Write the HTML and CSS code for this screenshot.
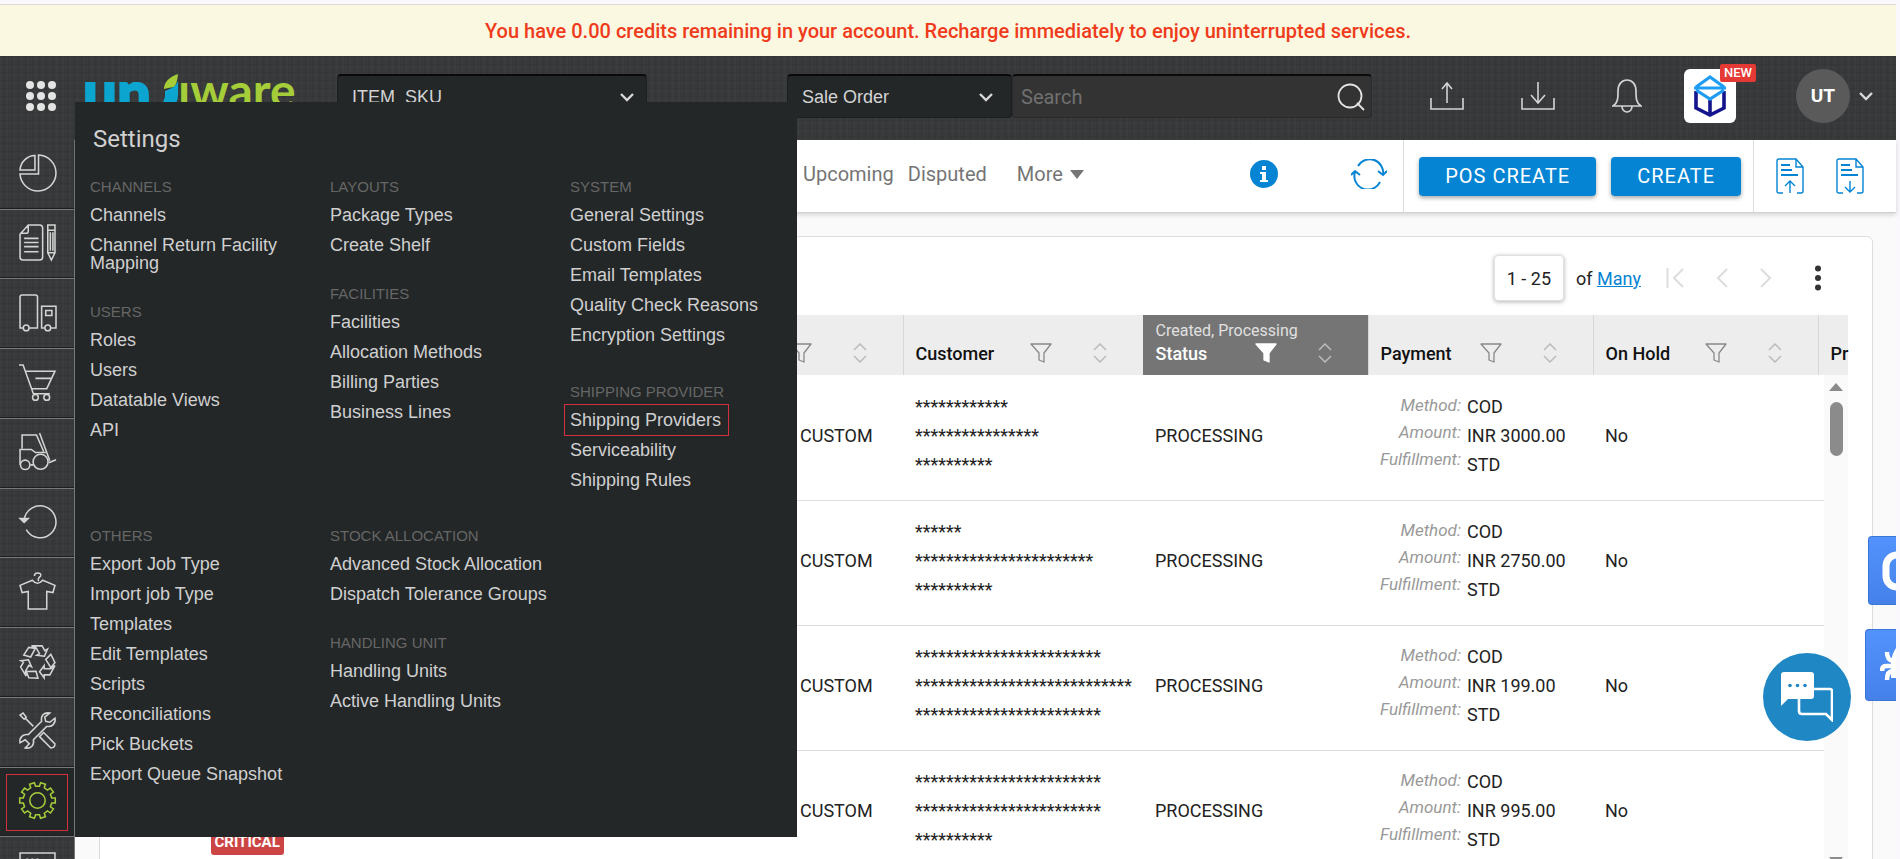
FILE: index.html
```html
<!DOCTYPE html>
<html lang="en">
<head>
  <meta charset="UTF-8">
  <meta name="viewport" content="width=device-width, initial-scale=1.0">
  <title>Sale Orders</title>
  <link rel="stylesheet" href="styles.css">
</head>
<body>
  <svg width="0" height="0" class="sprite" aria-hidden="true">
    <symbol id="chevron" viewBox="0 0 16 10"><path d="M2 2l6 6 6-6" fill="none" stroke="#d8d8d8" stroke-width="2.4"/></symbol>
    <symbol id="funnel" viewBox="0 0 22 20"><path d="M1 1h20l-7 9v9l-5-2v-7z" stroke-width="1.3" stroke-linejoin="round"/></symbol>
    <symbol id="sort" viewBox="0 0 14 20"><path d="M1 7l6-6 6 6M1 13l6 6 6-6" fill="none" stroke-width="1.5"/></symbol>
  </svg>

  <div class="page">
    <div class="banner">You have 0.00 credits remaining in your account. Recharge immediately to enjoy uninterrupted services.</div>

    <header class="header">
      <button class="icon-btn apps" aria-label="Apps">
        <svg width="30" height="30" viewBox="0 0 30 30" fill="#e4e4e4">
          <circle cx="4" cy="4" r="4"/><circle cx="15" cy="4" r="4"/><circle cx="26" cy="4" r="4"/>
          <circle cx="4" cy="15" r="4"/><circle cx="15" cy="15" r="4"/><circle cx="26" cy="15" r="4"/>
          <circle cx="4" cy="26" r="4"/><circle cx="15" cy="26" r="4"/><circle cx="26" cy="26" r="4"/>
        </svg>
      </button>
      <svg class="logo" width="212" height="50" viewBox="0 0 212 50">
        <text x="-3" y="42" class="logo-blue">un</text>
        <path d="M92 8q-2 6-13 10 1 10-6 16h13q6-4 6-12z" fill="#0ba5d0"/>
        <path d="M78 16q0-10 14-15-1 12-5 13-5 1-9 2z" fill="#a5cd39"/>
        <text x="92" y="35" class="logo-green">ıware</text>
      </svg>

      <div class="select-box item-select">
        <select aria-label="Search field"><option>ITEM_SKU</option></select>
        <svg width="16" height="10"><use href="#chevron"/></svg>
      </div>

      <div class="search-group">
        <div class="select-box order-select">
          <select aria-label="Search type"><option>Sale Order</option></select>
          <svg width="16" height="10"><use href="#chevron"/></svg>
        </div>
        <div class="search-box">
          <input type="text" placeholder="Search" aria-label="Search">
          <button class="icon-btn" aria-label="Search">
            <svg width="28" height="28" viewBox="0 0 28 28" fill="none" stroke="#e4e4e4" stroke-width="1.8"><circle cx="13" cy="13" r="11.5"/><path d="M20 20l7 7"/></svg>
          </button>
        </div>
      </div>

      <div class="header-actions">
        <button class="icon-btn" aria-label="Import">
          <svg width="34" height="30" viewBox="0 0 34 30" fill="none" stroke="#d4d4d4" stroke-width="1.6"><path d="M1 17v11h32V17M17 22V2M12 8l5-6 5 6"/></svg>
        </button>
        <button class="icon-btn" aria-label="Export">
          <svg width="34" height="30" viewBox="0 0 34 30" fill="none" stroke="#d4d4d4" stroke-width="1.6"><path d="M1 17v11h32V17M17 1v20M10 14l7 8 7-8"/></svg>
        </button>
        <button class="icon-btn" aria-label="Notifications">
          <svg width="30" height="34" viewBox="0 0 30 34" fill="none" stroke="#d4d4d4" stroke-width="1.7"><path d="M1 27c5-3 5-8 5-15C6 5 10 1 15 1s9 4 9 11c0 7 0 12 5 15zM10 27c0 8 10 8 10 0"/></svg>
        </button>
        <button class="icon-btn product" aria-label="New product">
          <svg width="34" height="42" viewBox="0 0 34 42" fill="none">
            <path d="M3 16v17l14 7 14-7V16M17 25v15" stroke="#14148c" stroke-width="3.6"/>
            <path d="M3 12L17 2l14 10M1 13h32M3 15l14 9 14-9" stroke="#1f9df5" stroke-width="3.2"/>
          </svg>
          <span class="new-badge">NEW</span>
        </button>
        <button class="icon-btn user">
          <span class="avatar">UT</span>
          <svg width="16" height="10"><use href="#chevron"/></svg>
        </button>
      </div>
    </header>

    <div class="workspace">
      <nav class="sidebar">
        <a href="#" aria-label="Dashboard"><svg viewBox="0 0 36 36"><path d="M19 19.500V1a17.500 17.500 0 1 1-18 18.500zM15.500 1.500v14H1a15 15 0 0 1 14.500-14z"/></svg></a>
        <a href="#" aria-label="Orders"><svg viewBox="0 0 36 36"><path d="M9 1h11a3 3 0 0 1 3 3v28a3 3 0 0 1-3 3H4a3 3 0 0 1-3-3V10zM9 1v6a2 2 0 0 1-2 2H1M5 14h14M5 18h14M5 22h14M5 27h14M28 1h7v27l-3.500 7-3.500-7zM28 6h7M30.500 8v18M33 8v18M28 28h7"/></svg></a>
        <a href="#" aria-label="Shipments"><svg viewBox="0 0 36 36"><path d="M4 33H1V3q0-2 2-2h13q2 0 2 2v30h-8M25 33h-3V12h14v21h-5M26 16h6v5h-6z"/><circle cx="7" cy="33" r="2.800"/><circle cx="28" cy="33" r="2.800"/></svg></a>
        <a href="#" aria-label="Procurement"><svg viewBox="0 0 36 36"><path d="M0 1h4l10 28h16M7 7h28l-8 17H12M16 14h15"/><circle cx="16" cy="32.500" r="2.800"/><circle cx="27" cy="32.500" r="2.800"/></svg></a>
        <a href="#" aria-label="Inventory"><svg viewBox="0 0 36 36"><path d="M3 15V2h14l7 16M1 31V16h11l4 3h10M20 0l10 27M29 29l7-3M11 31h3"/><circle cx="6" cy="31" r="4.600"/><circle cx="21" cy="28" r="7.300"/></svg></a>
        <a href="#" aria-label="Returns"><svg viewBox="0 0 36 36"><path d="M5 17a15.500 15.500 0 1 1 2 9"/><path d="M1 15h8l-4 4z" fill="#d4d4d4"/></svg></a>
        <a href="#" aria-label="Products"><svg viewBox="0 0 36 36"><path d="M13 7L1 12l2 7 6-1v17h18V18l6 1 2-7-12-5q-5 6-10 0zM15 3q0-3 3-3 4 0 3 3-3 2-2 5"/></svg></a>
        <a href="#" aria-label="Recycle"><svg viewBox="0 0 36 36">
          <g id="recycle-arm"><path d="M20 29l4.500-6v3H31l4-3-5 9h-5.500v3zM31 12l4 8-4 5-5-8z"/></g>
          <use href="#recycle-arm" transform="rotate(120 18 20)"/>
          <use href="#recycle-arm" transform="rotate(240 18 20)"/>
        </svg></a>
        <a href="#" aria-label="Tools"><svg viewBox="0 0 36 36"><path d="M30 1c-6-1-9 3-8 8L9 22c-5-1-9 3-8 8l5-3 4 4-4 4c6 1 9-3 8-8l13-13c5 1 9-3 8-8l-5 4-4-1-1-4zM1 3l3-2 3 4-2 2zM6 6l8 8M20 24l4-4 11 11q0 4-4 4z"/></svg></a>
        <a href="#" class="active" aria-label="Settings"><svg viewBox="0 0 36 36"><path d="M19.900 4.100L21 .8l4.700 1.500-1.100 3.300 3.100 2.300 2.900-2.100 2.900 4-2.900 2.100 1.200 3.700h3.500v4.800h-3.500l-1.200 3.700 2.900 2.100-2.900 4-2.900-2.100-3.100 2.300 1.100 3.300-4.700 1.500-1.100-3.300h-3.800L15 35.200l-4.700-1.500 1.100-3.300-3.100-2.300-2.900 2.100-2.900-4 2.900-2.100-1.200-3.700H.7v-4.800h3.500l1.200-3.700-2.900-2.100 2.900-4 2.900 2.100 3.100-2.300-1.100-3.300L15 .8l1.100 3.300z"/><circle cx="18" cy="18" r="7.500"/></svg></a>
        <a href="#" aria-label="Console"><svg viewBox="0 0 36 36"><path d="M1 1h34v30H1zM7 7h2M12 7h2M17 7h2"/></svg></a>
      </nav>

      <section class="settings-menu">
        <h2>Settings</h2>
        <div class="menu-grid">
          <div>
            <div class="menu-group">
              <h3>CHANNELS</h3>
              <a href="#">Channels</a>
              <a href="#">Channel Return Facility Mapping</a>
            </div>
            <div class="menu-group">
              <h3>USERS</h3>
              <a href="#">Roles</a>
              <a href="#">Users</a>
              <a href="#">Datatable Views</a>
              <a href="#">API</a>
            </div>
          </div>
          <div>
            <div class="menu-group">
              <h3>LAYOUTS</h3>
              <a href="#">Package Types</a>
              <a href="#">Create Shelf</a>
            </div>
            <div class="menu-group">
              <h3>FACILITIES</h3>
              <a href="#">Facilities</a>
              <a href="#">Allocation Methods</a>
              <a href="#">Billing Parties</a>
              <a href="#">Business Lines</a>
            </div>
          </div>
          <div>
            <div class="menu-group system">
              <h3>SYSTEM</h3>
              <a href="#">General Settings</a>
              <a href="#">Custom Fields</a>
              <a href="#">Email Templates</a>
              <a href="#">Quality Check Reasons</a>
              <a href="#">Encryption Settings</a>
            </div>
            <div class="menu-group">
              <h3>SHIPPING PROVIDER</h3>
              <a href="#" class="marked">Shipping Providers</a>
              <a href="#">Serviceability</a>
              <a href="#">Shipping Rules</a>
            </div>
          </div>
          <div>
            <div class="menu-group">
              <h3>OTHERS</h3>
              <a href="#">Export Job Type</a>
              <a href="#">Import job Type</a>
              <a href="#">Templates</a>
              <a href="#">Edit Templates</a>
              <a href="#">Scripts</a>
              <a href="#">Reconciliations</a>
              <a href="#">Pick Buckets</a>
              <a href="#">Export Queue Snapshot</a>
            </div>
          </div>
          <div>
            <div class="menu-group">
              <h3>STOCK ALLOCATION</h3>
              <a href="#">Advanced Stock Allocation</a>
              <a href="#">Dispatch Tolerance Groups</a>
            </div>
            <div class="menu-group">
              <h3>HANDLING UNIT</h3>
              <a href="#">Handling Units</a>
              <a href="#">Active Handling Units</a>
            </div>
          </div>
        </div>
      </section>

      <main class="main">
        <div class="subnav">
          <div class="tabs">
            <a href="#">Upcoming</a>
            <a href="#">Disputed</a>
            <a href="#" class="more">More <span class="caret"></span></a>
          </div>
          <div class="subnav-tools">
            <button class="icon-btn" aria-label="Info">
              <svg width="28" height="28" viewBox="0 0 28 28"><circle cx="14" cy="14" r="14" fill="#0584d4"/><path d="M12 6h4v4h-4zM10 12h6v8h2v2h-8v-2h2v-6h-2z" fill="#fff"/></svg>
            </button>
            <button class="icon-btn" aria-label="Refresh">
              <svg width="36" height="30" viewBox="0 0 36 30" fill="none" stroke="#0584d4" stroke-width="2"><path d="M7 7a13.500 13.500 0 0 1 25 9M29 23A13.500 13.500 0 0 1 4 13M27 12l5 4 4-4M0 16l4-4 5 4"/></svg>
            </button>
          </div>
          <div class="subnav-buttons">
            <button class="primary-btn">POS CREATE</button>
            <button class="primary-btn">CREATE</button>
          </div>
          <div class="subnav-docs">
            <button class="icon-btn" aria-label="Import orders">
              <svg width="28" height="36" viewBox="0 0 28 36" fill="none" stroke="#0584d4" stroke-width="1.400"><path d="M7 35H3q-2 0-2-2V3q0-2 2-2h17l7 8v24q0 2-2 2h-4M20 1v8h7M14 35V24M9 28l5-5 5 5"/><path d="M5 7h9M5 12h11M5 17h17" stroke-width="2"/></svg>
            </button>
            <button class="icon-btn" aria-label="Export orders">
              <svg width="28" height="36" viewBox="0 0 28 36" fill="none" stroke="#0584d4" stroke-width="1.400"><path d="M7 35H3q-2 0-2-2V3q0-2 2-2h17l7 8v24q0 2-2 2h-4M20 1v8h7M14 23v11M9 29l5 5 5-5"/><path d="M5 7h9M5 12h11M5 17h17" stroke-width="2"/></svg>
            </button>
          </div>
        </div>

        <div class="panel">
          <div class="panel-toolbar">
            <button class="range-btn">1 - 25</button>
            <span class="total">of <a href="#">Many</a></span>
            <div class="pager">
              <button class="icon-btn" aria-label="First page"><svg width="18" height="20" viewBox="0 0 18 20"><path d="M1.500 0v20M17 1L8 10l9 9"/></svg></button>
              <button class="icon-btn" aria-label="Previous page"><svg width="12" height="20" viewBox="0 0 12 20"><path d="M11 1l-9 9 9 9"/></svg></button>
              <button class="icon-btn" aria-label="Next page"><svg width="12" height="20" viewBox="0 0 12 20"><path d="M1 1l9 9-9 9"/></svg></button>
            </div>
            <button class="icon-btn dots" aria-label="More options"><svg width="6" height="26" viewBox="0 0 6 26" fill="#333"><circle cx="3" cy="3.500" r="3"/><circle cx="3" cy="13" r="3"/><circle cx="3" cy="22.500" r="3"/></svg></button>
          </div>

          <div class="table-wrap">
            <table class="orders">
              <colgroup>
                <col><col class="col-std"><col class="col-customer"><col class="col-std"><col class="col-std"><col class="col-std"><col class="col-last">
              </colgroup>
              <thead>
                <tr>
                  <th></th>
                  <th><div class="th-row"><svg class="funnel"><use href="#funnel"/></svg><svg class="sort"><use href="#sort"/></svg></div></th>
                  <th><div class="th-row"><span>Customer</span><svg class="funnel"><use href="#funnel"/></svg><svg class="sort"><use href="#sort"/></svg></div></th>
                  <th class="filtered"><div class="th-filter">Created, Processing</div><div class="th-row"><span>Status</span><svg class="funnel"><use href="#funnel"/></svg><svg class="sort"><use href="#sort"/></svg></div></th>
                  <th><div class="th-row"><span>Payment</span><svg class="funnel"><use href="#funnel"/></svg><svg class="sort"><use href="#sort"/></svg></div></th>
                  <th><div class="th-row"><span>On Hold</span><svg class="funnel"><use href="#funnel"/></svg><svg class="sort"><use href="#sort"/></svg></div></th>
                  <th><div class="th-row"><span>Pr</span></div></th>
                </tr>
              </thead>
              <tbody id="orderRows"></tbody>
            </table>
            <div class="scrollbar">
              <span class="arrow up"></span>
              <span class="thumb"></span>
              <span class="arrow down"></span>
            </div>
          </div>
        </div>
      </main>

      <button class="side-tab tab-one" aria-label="Capture">
        <svg width="14" height="40" viewBox="0 0 14 40"><rect x="4" y="4" width="40" height="32" rx="11" fill="none" stroke="#fff" stroke-width="7"/></svg>
      </button>
      <button class="side-tab tab-two" aria-label="Report a bug">
        <svg width="16" height="40" viewBox="0 0 16 40"><path d="M16 3q-4 6-5 14v16h5z" fill="#fff"/><path d="M13 16q-6-1-6-9M13 21H6q-4 0-4 5M13 26q-6 0-6 9" fill="none" stroke="#fff" stroke-width="4.500"/></svg>
      </button>
      <button class="chat-btn" aria-label="Chat">
        <svg width="52" height="50" viewBox="0 0 52 50">
          <path d="M18 26v13q0 3 3 3h24l6 6V19q0-2-2-2H32" fill="none" stroke="#fff" stroke-width="2.600"/>
          <path d="M3 0h27q3 0 3 3v21q0 3-3 3H7l-7 7V3q0-3 3-3z" fill="#fff"/>
          <circle cx="9" cy="13.500" r="1.800" fill="#1f87c4"/><circle cx="16.500" cy="13.500" r="1.800" fill="#1f87c4"/><circle cx="24" cy="13.500" r="1.800" fill="#1f87c4"/>
        </svg>
      </button>
    </div>
  </div>

  <script>
    const orders = [
      { customer: [12, 16, 10], amount: "INR 3000.00" },
      { customer: [6, 23, 10], amount: "INR 2750.00" },
      { customer: [24, 28, 24], amount: "INR 199.00" },
      { customer: [24, 24, 10], amount: "INR 995.00", critical: true }
    ];

    function renderOrders() {
      const body = document.getElementById('orderRows');

      orders.forEach(order => {
        const row = document.createElement('tr');
        const lines = order.customer.map(count => `<div>${'*'.repeat(count)}</div>`).join('');
        row.innerHTML = `
          <td class="flag-cell">${order.critical ? '<span class="critical">CRITICAL</span>' : ''}</td>
          <td class="channel-cell">CUSTOM</td>
          <td>${lines}</td>
          <td>PROCESSING</td>
          <td>
            <div class="payment">
              <div class="payment-labels"><div>Method:</div><div>Amount:</div><div>Fulfillment:</div></div>
              <div><div>COD</div><div>${order.amount}</div><div>STD</div></div>
            </div>
          </td>
          <td>No</td>
          <td></td>`;
        body.appendChild(row);
      });
    }

    renderOrders();
  </script>
</body>
</html>
```
FILE: styles.css
```css
* {
  box-sizing: border-box;
}
body {
  margin: 0;
  height: 100vh;
  overflow: hidden;
  background: #faf8fd;
  font-family: Roboto, sans-serif;
  font-size: 18px;
  color: #222;
}
.sprite {
  position: absolute;
}
a {
  color: inherit;
  text-decoration: none;
}
button, select, input {
  font-family: inherit;
}
.icon-btn {
  display: flex;
  align-items: center;
  padding: 0;
  border: none;
  background: none;
  cursor: pointer;
}
.page {
  display: flex;
  flex-direction: column;
  height: 100%;
  margin-right: 4px;
  padding-top: 4px;
}
.banner {
  height: 52px;
  border-top: 1px solid #dcdad6;
  background: #faf8e0;
  color: #ef3b1c;
  font-size: 20px;
  font-weight: 500;
  line-height: 52px;
  text-align: center;
}

/* header */
.header, .sidebar {
  background-color: #37393a;
  background-image:
    repeating-linear-gradient(90deg, rgba(255,255,255,0.02) 0 1px, transparent 1px 4px, rgba(0,0,0,0.05) 4px 5px, transparent 5px 7px),
    repeating-linear-gradient(0deg, rgba(255,255,255,0.02) 0 1px, transparent 1px 3px, rgba(0,0,0,0.05) 3px 4px, transparent 4px 8px);
}
.header {
  display: flex;
  align-items: center;
  flex: none;
  height: 84px;
  padding: 0 22px 4px 26px;
}
.logo {
  margin: 4px 0 0 30px;
  overflow: visible;
}
.logo text {
  font-family: Lato, sans-serif;
  font-size: 60px;
}
.logo .logo-blue {
  fill: #0ba5d0;
  stroke: #0ba5d0;
  stroke-width: 2;
  font-weight: 900;
}
.logo .logo-green {
  fill: #a5cd39;
  font-size: 48px;
  font-weight: 700;
}
.select-box {
  position: relative;
  height: 44px;
}
.select-box select {
  width: 100%;
  height: 100%;
  padding: 0 14px;
  border: 1px solid #1c1e1f;
  border-top: 2px solid #0a0a0a;
  border-radius: 4px;
  background: #232728;
  color: #d4d4d4;
  font-family: "Liberation Sans", Arial, sans-serif;
  font-size: 18px;
  appearance: none;
}
.select-box svg {
  position: absolute;
  top: 18px;
  right: 12px;
  pointer-events: none;
}
.item-select {
  width: 310px;
  margin-left: 39px;
}
.search-group {
  display: flex;
  flex: 1;
  max-width: 585px;
  margin-left: 140px;
}
.order-select {
  width: 225px;
}
.order-select svg {
  right: 18px;
}
.search-box {
  display: flex;
  flex: 1;
  height: 44px;
  padding: 0 6px;
  border: 1px solid #2a2a2a;
  border-top: 2px solid #0a0a0a;
  border-radius: 4px;
  background: #333;
}
.search-box input {
  flex: 1;
  min-width: 0;
  border: none;
  background: none;
  color: #d4d4d4;
  font-size: 20px;
}
.search-box input::placeholder {
  color: #707070;
}
.header-actions {
  display: flex;
  align-items: center;
  gap: 57px;
  margin-left: auto;
}
.product {
  position: relative;
  justify-content: center;
  width: 52px;
  height: 54px;
  margin: 0 3px 0 -15px;
  border-radius: 6px;
  background: #fff;
}
.new-badge {
  position: absolute;
  top: -5px;
  right: -20px;
  padding: 0 4px;
  border-radius: 2px;
  background: #e53935;
  color: #fff;
  font-size: 13px;
  font-weight: 500;
  line-height: 18px;
}
.user {
  gap: 8px;
}
.avatar {
  width: 54px;
  border-radius: 50%;
  background: #5a5a5a;
  color: #fff;
  font-size: 19px;
  font-weight: 700;
  line-height: 54px;
}

/* sidebar */
.workspace {
  position: relative;
  display: flex;
  flex: 1;
  min-height: 0;
}
.sidebar {
  display: grid;
  grid-template-rows: repeat(11, 1fr);
  flex: none;
  width: 75px;
  height: 767px;
  border-right: 1px solid #77797a;
}
.sidebar a {
  display: flex;
  align-items: center;
  justify-content: center;
  padding-bottom: 3px;
  border-bottom: 1px solid #77797a;
  box-shadow: inset 0 -1px 0 #1c1e1f;
}
.sidebar svg {
  width: 37px;
  height: 37px;
  fill: none;
  stroke: #d4d4d4;
  stroke-width: 1.5;
  overflow: visible;
}
.sidebar .active {
  background: #232728;
  outline: 1px solid #d32f3f;
  outline-offset: -7px;
}
.sidebar .active svg {
  stroke: #a5cd39;
}

/* settings menu */
.settings-menu {
  position: absolute;
  z-index: 2;
  top: -38px;
  left: 75px;
  width: 722px;
  padding: 22px 0 48px 15px;
  background: #232728;
  color: #d0d0d0;
  font-family: "Liberation Sans", Arial, sans-serif;
}
.settings-menu h2 {
  margin: 0 3px 23px;
  font-family: Roboto, sans-serif;
  font-size: 24px;
  font-weight: 400;
  line-height: 30px;
}
.menu-grid {
  display: grid;
  grid-template-columns: 240px 240px 220px;
  row-gap: 31px;
}
.menu-group + .menu-group {
  margin-top: 24px;
}
.menu-group.system {
  margin-bottom: 32px;
}
.menu-group h3 {
  margin: 0 0 3px;
  color: #666;
  font-size: 15px;
  font-weight: 400;
  line-height: 20px;
}
.menu-group a {
  display: block;
  padding: 6px 0;
  line-height: 18px;
}
.menu-group .marked {
  width: fit-content;
  margin-left: -5px;
  padding: 6px 7px 6px 5px;
  outline: 1px solid #d32f3f;
}

/* sub navigation */
.main {
  flex: 1;
  min-width: 0;
  background: #fafafa;
}
.subnav {
  display: flex;
  height: 73px;
  border-bottom: 1px solid #d0d0d0;
  background: #fff;
  box-shadow: 0 2px 5px rgba(0,0,0,0.15);
}
.tabs {
  display: flex;
  align-items: center;
  gap: 14px;
  margin-left: 728px;
  padding-bottom: 4px;
  color: #757575;
  font-size: 20px;
}
.more {
  display: flex;
  align-items: center;
  gap: 7px;
  margin-left: 16px;
}
.caret {
  border: 7px solid transparent;
  border-top: 9px solid #757575;
  border-bottom: none;
}
.subnav-tools, .subnav-buttons, .subnav-docs {
  display: flex;
  align-items: center;
  padding: 0 16px;
}
.subnav-tools {
  gap: 73px;
  margin-left: auto;
  padding-bottom: 4px;
}
.subnav-buttons {
  gap: 15px;
  border-left: 1px solid #ddd;
  border-right: 1px solid #ddd;
  padding: 0 12px 0 15px;
}
.subnav-docs {
  gap: 32px;
  padding: 0 32px 0 22px;
}
.primary-btn {
  height: 39px;
  padding: 0 26px;
  border: none;
  border-radius: 4px;
  background: #0584d4;
  box-shadow: 0 2px 4px rgba(0,0,0,0.35);
  color: #fff;
  font-size: 20px;
  letter-spacing: 1px;
}

/* orders panel */
.panel {
  margin: 23px 23px 0 24px;
  padding: 0 24px;
  height: 640px;
  border: 1px solid #ddd;
  border-radius: 6px;
  background: #fff;
}
.panel-toolbar {
  display: flex;
  align-items: center;
  justify-content: flex-end;
  padding: 18px 27px 14px 0;
}
.range-btn {
  height: 46px;
  padding: 0 12px;
  border: 1px solid #e0e0e0;
  border-radius: 4px;
  background: #fff;
  box-shadow: 0 1px 4px rgba(0,0,0,0.3);
  color: #222;
  font-size: 18px;
}
.total {
  margin-left: 12px;
}
.total a {
  color: #0584d4;
  text-decoration: underline;
}
.pager {
  display: flex;
  gap: 32px;
  margin: 0 43px 0 25px;
}
.pager svg {
  fill: none;
  stroke: #ddd;
  stroke-width: 2;
}
.table-wrap {
  position: relative;
}
.orders {
  width: 100%;
  table-layout: fixed;
  border-collapse: collapse;
}
.col-std {
  width: 225px;
}
.col-customer {
  width: 240px;
}
.col-last {
  width: 30px;
}
.orders th {
  height: 60px;
  padding: 0 36px 11px 12px;
  border-left: 1px solid #d8d8d8;
  background: #ededed;
  color: #111;
  font-weight: 500;
  text-align: left;
  vertical-align: bottom;
}
.orders th:last-child {
  padding-right: 0;
}
.th-row {
  display: flex;
  align-items: center;
  height: 22px;
}
.th-row .funnel {
  width: 22px;
  height: 20px;
  margin: 0 41px 0 auto;
  fill: none;
  stroke: #888;
}
.th-row .sort {
  width: 14px;
  height: 20px;
  stroke: #bbb;
}
.orders .filtered {
  border-color: #757575;
  background: #757575;
  color: #fff;
}
.th-filter {
  color: #e0e0e0;
  font-size: 16px;
  font-weight: 400;
  line-height: 22px;
  white-space: nowrap;
}
.filtered .funnel {
  fill: #fff;
  stroke: #fff;
}
.orders td {
  height: 125px;
  padding: 0 12px 4px;
  border-bottom: 1px solid #ddd;
  line-height: 29px;
}
.orders .channel-cell {
  padding-left: 122px;
}
.orders .flag-cell {
  padding: 0 0 20px 86px;
  vertical-align: bottom;
}
.critical {
  display: inline-block;
  padding: 0 4px;
  border-radius: 3px;
  background: #cc4444;
  color: #fff;
  font-size: 15px;
  font-weight: 700;
  line-height: 26px;
}
.payment {
  display: flex;
  gap: 6px;
}
.payment-labels {
  color: #999;
  font-size: 17px;
  font-style: italic;
  line-height: 27px;
  text-align: right;
}
.scrollbar {
  position: absolute;
  top: 60px;
  right: 0;
  display: flex;
  flex-direction: column;
  align-items: center;
  width: 24px;
  height: 490px;
  padding-top: 8px;
  background: #fafafa;
}
.arrow {
  border: 7px solid transparent;
}
.arrow.up {
  border-top: none;
  border-bottom: 8px solid #8b8b8b;
}
.arrow.down {
  margin-top: auto;
  border-top: 8px solid #8b8b8b;
  border-bottom: none;
}
.thumb {
  width: 13px;
  height: 54px;
  margin-top: 11px;
  border-radius: 7px;
  background: #8b8b8b;
}

/* floating buttons */
.side-tab {
  position: absolute;
  right: 0;
  display: flex;
  align-items: center;
  justify-content: flex-end;
  padding: 0;
  border: 1px solid #3a76d8;
  border-right: none;
  border-radius: 4px 0 0 4px;
  background: linear-gradient(#5292fc, #4681ea);
}
.tab-one {
  top: 396px;
  width: 28px;
  height: 69px;
}
.tab-two {
  top: 489px;
  width: 31px;
  height: 72px;
}
.chat-btn {
  position: absolute;
  top: 513px;
  right: 45px;
  display: flex;
  align-items: center;
  justify-content: center;
  width: 88px;
  height: 88px;
  border: none;
  border-radius: 50%;
  background: #1f87c4;
}
```
